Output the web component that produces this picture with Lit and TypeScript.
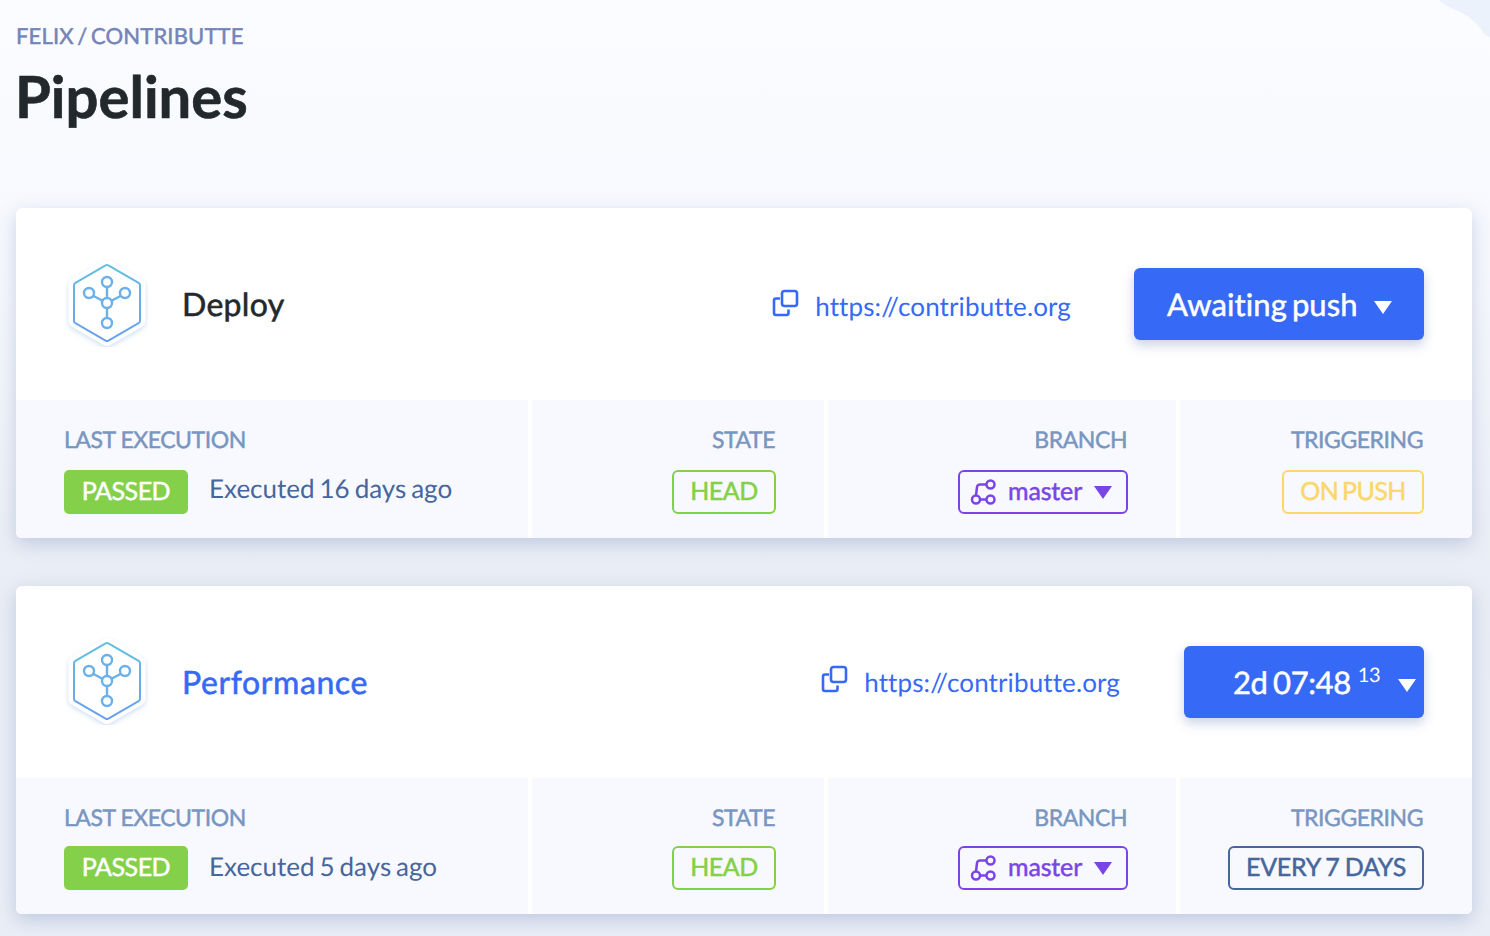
import { LitElement, html, css, svg } from "lit";
import { customElement } from "lit/decorators.js";

const hex = html`<svg class="hex" width="84" height="88" viewBox="0 0 84 88" fill="none">
  <defs>
    <linearGradient id="hg" x1="0" y1="0" x2="0" y2="1"><stop offset="0" stop-color="#62c0de"/><stop offset="1" stop-color="#6a9ff0"/></linearGradient>
    <filter id="hs" x="-20%" y="-20%" width="140%" height="140%"><feDropShadow dx="0" dy="2" stdDeviation="2.5" flood-color="#a9c6e8" flood-opacity=".55"/></filter>
  </defs>
  <path d="M42 4 L75.5 23.5 Q77 24.5 77 26 V62 Q77 63.5 75.5 64.5 L43.5 83 Q42 84 40.5 83 L8.5 64.5 Q7 63.5 7 62 V26 Q7 24.5 8.5 23.5 L40.5 4.8 Q42 4 43.5 4.8 Z" fill="#fff" stroke="#fff" stroke-width="7" filter="url(#hs)"/>
  <path d="M40.6 6.3 Q42 5.5 43.4 6.3 L73.6 23.8 Q75 24.6 75 26.2 V61.8 Q75 63.4 73.6 64.2 L43.4 81.7 Q42 82.5 40.6 81.7 L10.4 64.2 Q9 63.4 9 61.8 V26.2 Q9 24.6 10.4 23.8 Z" stroke="url(#hg)" stroke-width="2"/>
  <g stroke="#6bb0e8" stroke-width="2.4">
    <path d="M42 28 V39 M42 49 V59 M28.5 37 L37.6 41.8 M55.5 37 L46.4 41.8"/>
    <circle cx="42" cy="23" r="5"/><circle cx="24" cy="34" r="5"/><circle cx="60" cy="34" r="5"/><circle cx="42" cy="44" r="5"/><circle cx="42" cy="64" r="5"/>
  </g>
</svg>`;

const linkIcon = html`<svg class="link-icon" width="28" height="28" viewBox="0 0 28 28" fill="none" stroke="#3669f5" stroke-width="2.6">
  <rect x="10" y="2" width="15" height="15" rx="2.5"/>
  <path d="M8 9.5 H4 Q2 9.5 2 11.5 V24 Q2 26 4 26 H14.5 Q16.5 26 16.5 24 V20.5"/>
</svg>`;

const branchIcon = html`<svg class="branch" width="28" height="28" viewBox="0 0 28 28" fill="none" stroke="#7b45e6" stroke-width="2.5">
  <circle cx="20.5" cy="6.5" r="4"/><circle cx="6" cy="21.5" r="4"/><circle cx="20.5" cy="21.5" r="4"/>
  <path d="M10 21.5 H16.5 M16.5 6.5 H10 Q7.5 6.5 7 9 L6 17.5"/>
</svg>`;

interface Pipe {
  name: string; link: boolean; when: string; trig: string; trigClass: string; time: boolean;
}
const pipes: Pipe[] = [
  { name: "Deploy", link: false, when: "Executed 16 days ago", trig: "ON PUSH", trigClass: "yellow", time: false },
  { name: "Performance", link: true, when: "Executed 5 days ago", trig: "EVERY 7 DAYS", trigClass: "slate", time: true },
];

@customElement("app-root")
export class AppRoot extends LitElement {
  static styles = css`
    :host { display: block; position: relative; height: 936px; overflow: hidden; box-sizing: border-box;
      font-family: Lato, sans-serif; font-variant-ligatures: none; text-rendering: geometricPrecision;
      background: linear-gradient(180deg, #fbfcff 0%, #f6f8fd 28%, #e9edf5 62%, #e9eef6 100%); }
    .blob { position: absolute; top: 0; right: 0; }
    .page { position: relative; padding: 23px 18px 0 16px; display: flex; flex-direction: column; }
    .crumb { font-size: 22px; line-height: 26px; color: #7484b8; letter-spacing: .16px; word-spacing: -2.2px; -webkit-text-stroke: .5px #7484b8; }
    h1 { margin: 14px 0 0 -1px; font-size: 58px; line-height: 68px; font-weight: 700; color: #22282b; -webkit-text-stroke: .6px #22282b; }
    .cards { margin-top: 77px; display: flex; flex-direction: column; gap: 48px; }
    .card { background: #fff; border-radius: 6px; box-shadow: 0 6px 18px rgba(95,120,175,.3); overflow: hidden; }
    .top { height: 192px; display: flex; align-items: center; padding: 0 48px 0 49px; box-sizing: border-box; }
    .hex { margin-top: -2px; flex: none; display: block; }
    .name { margin-left: 33px; margin-top: -1px; font-size: 32px; line-height: 40px; color: #22282b; letter-spacing: .3px; -webkit-text-stroke: .55px #22282b; }
    .name.link { color: #3669f5; -webkit-text-stroke: .55px #3669f5; margin-top: 0; letter-spacing: .6px; }
    .url { margin-left: auto; display: flex; align-items: center; font-size: 26px; color: #3669f5; margin-top: 4px; letter-spacing: .12px; }
    .perf .url { margin-top: 0; }
    .link-icon { margin-right: 15px; margin-top: -6px; }
    .btn { margin-left: 63px; height: 72px; border-radius: 6px; background: #3669f5; color: #fff; display: flex; align-items: center;
      box-shadow: 0 5px 12px rgba(60,90,160,.28); box-sizing: border-box; font-size: 31px; -webkit-text-stroke: .5px #fff; }
    .btn.a { width: 290px; padding-left: 33px; letter-spacing: .1px; word-spacing: -3px; }
    .btn.t { width: 240px; padding-left: 49px; margin-left: 64px; letter-spacing: -.4px; word-spacing: -2px; }
    .tri { width: 0; height: 0; border-left: 9px solid transparent; border-right: 9px solid transparent; border-top: 13px solid #fff; }
    .btn.a .tri { margin-left: 16px; margin-top: 6px; }
    .btn.t .tri { margin-left: 18px; margin-top: 6px; }
    sup { font-size: 20px; font-weight: 400; line-height: 1; margin-left: 7px; margin-top: -15px; align-self: center; letter-spacing: -.4px; -webkit-text-stroke: 0; }
    .bottom { display: grid; grid-template-columns: 512px 292px 348px 292px; gap: 4px; background: #fff; }
    .cell { background: #f8f9ff; height: 138px; padding: 26px 48px 0; box-sizing: border-box; display: flex; flex-direction: column; align-items: flex-end; }
    .perf .cell { height: 136px; }
    .cell.first { align-items: flex-start; }
    .label { font-size: 23px; line-height: 26px; color: #7896bf; letter-spacing: -.45px; -webkit-text-stroke: .5px #7896bf; margin-right: 1px; }
    .row { margin-top: 18px; display: flex; align-items: center; }
    .perf .row { margin-top: 16px; }
    .passed { height: 44px; padding-bottom: 2px; box-sizing: border-box; width: 124px; border-radius: 5px; background: #85d04a; color: #fff; font-size: 25px;
      display: flex; align-items: center; justify-content: center; letter-spacing: -.5px; -webkit-text-stroke: .5px #fff; }
    .when { margin-left: 21px; margin-top: -8px; font-size: 26px; color: #47669b; word-spacing: -1.7px; }
    .perf .when { margin-top: -4px; }
    .tag { height: 44px; box-sizing: border-box; padding-bottom: 2px; border-radius: 6px; border: 2px solid; display: flex; align-items: center; justify-content: center;
      font-size: 25px; -webkit-text-stroke: .5px currentColor; }
    .green { width: 104px; border-color: #85d04a; color: #85d04a; letter-spacing: -.5px; }
    .yellow { width: 142px; border-color: #fbd76b; color: #fbd76b; letter-spacing: -.6px; word-spacing: -2px; }
    .slate { width: 196px; border-color: #47669b; color: #47669b; letter-spacing: -.25px; word-spacing: -1px; }
    .violet { width: 170px; border-color: #7b45e6; color: #7b45e6; justify-content: flex-start; padding-left: 10px; padding-bottom: 0; }
    .violet span { margin-left: 10px; margin-top: -2px; font-size: 25px; letter-spacing: -.15px; }
    .violet .vt { width: 0; height: 0; margin-left: 12px; border-left: 9px solid transparent; border-right: 9px solid transparent; border-top: 13px solid #7b45e6; }
  `;

  render() {
    return html`
      <svg class="blob" width="60" height="40" viewBox="0 0 60 40">
        ${svg`<path d="M9 0 C14 6 22 8 30 12 C42 18 50 26 55 35 L60 37 V0 Z" fill="#ebf2fc"/>`}
      </svg>
      <div class="page">
        <div class="crumb">FELIX / CONTRIBUTTE</div>
        <h1>Pipelines</h1>
        <div class="cards">
          ${pipes.map((p) => html`
            <section class="card ${p.link ? "perf" : ""}">
              <div class="top">
                ${hex}
                <div class="name ${p.link ? "link" : ""}">${p.name}</div>
                <div class="url">${linkIcon}https://contributte.org</div>
                ${p.time
                  ? html`<div class="btn t">2d 07:48<sup>13</sup><div class="tri"></div></div>`
                  : html`<div class="btn a">Awaiting push<div class="tri"></div></div>`}
              </div>
              <div class="bottom">
                <div class="cell first">
                  <div class="label">LAST EXECUTION</div>
                  <div class="row"><div class="passed">PASSED</div><div class="when">${p.when}</div></div>
                </div>
                <div class="cell">
                  <div class="label">STATE</div>
                  <div class="row"><div class="tag green">HEAD</div></div>
                </div>
                <div class="cell">
                  <div class="label">BRANCH</div>
                  <div class="row"><div class="tag violet">${branchIcon}<span>master</span><div class="vt"></div></div></div>
                </div>
                <div class="cell">
                  <div class="label">TRIGGERING</div>
                  <div class="row"><div class="tag ${p.trigClass}">${p.trig}</div></div>
                </div>
              </div>
            </section>`)}
        </div>
      </div>
    `;
  }
}
